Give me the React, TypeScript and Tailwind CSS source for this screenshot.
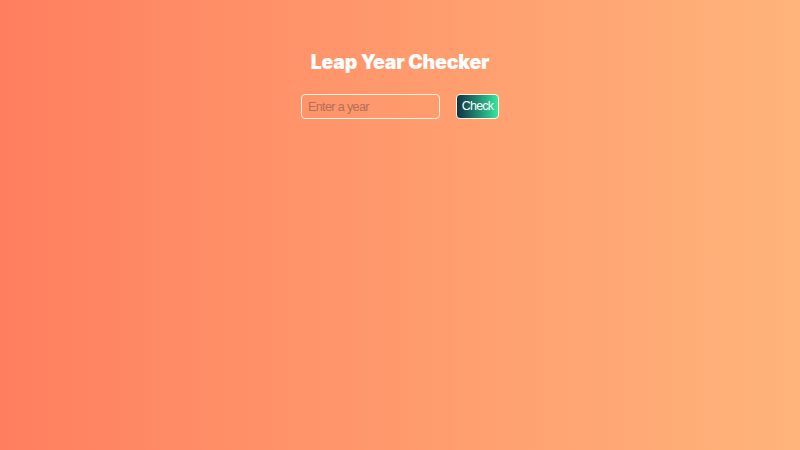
export default function App() {
  return (
    <div className="flex h-[450px] w-[800px] flex-col items-center bg-gradient-to-r from-[#ff7e5f] to-[#feb47b] pt-[49px] font-['Liberation_Sans',Arial,sans-serif]">
      <h1 className="text-[19.5px] leading-[26px] font-black tracking-[-0.2px] text-white font-['Inter','Lato',sans-serif]">
        Leap Year Checker
      </h1>
      <div className="mt-[19px] flex items-center gap-[16px]">
        <input
          type="text"
          placeholder="Enter a year"
          className="h-[25px] w-[139px] rounded-[4px] border-[1.5px] border-[#fff3e6] bg-transparent px-[6px] text-[12.5px] tracking-[-0.6px] text-white outline-none placeholder:text-[#b0705a]"
        />
        <button
          type="button"
          className="h-[25px] w-[43px] rounded-[4px] border-[1.5px] border-[#fff3e6] bg-gradient-to-r from-[#0f3443] to-[#34e89e] text-[12.5px] tracking-[-0.8px] text-white"
        >
          Check
        </button>
      </div>
    </div>
  );
}
